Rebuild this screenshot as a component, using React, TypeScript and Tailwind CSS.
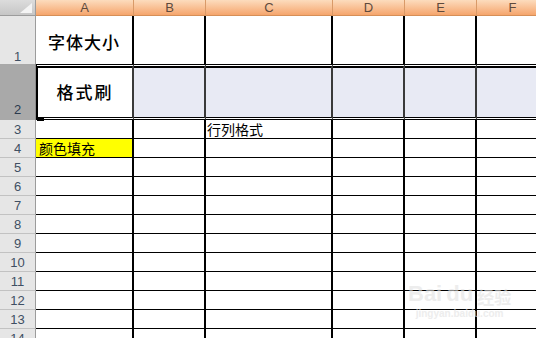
import React from 'react';

const colW = ['w-[98px]', 'w-[72px]', 'w-[127px]', 'w-[72px]', 'w-[72px]', 'w-[72px]'];
const letters = ['A', 'B', 'C', 'D', 'E', 'F'];
const cjk = "font-['Noto_Sans_CJK_SC',sans-serif]";

function RowHead({ n, dark, tall }: { n: number; dark?: boolean; tall?: boolean }) {
  return (
    <div
      className={`w-[36px] shrink-0 flex items-end justify-center border-r border-b border-r-[#9c9c9c] border-b-[#c2c2c2] font-['Liberation_Sans',sans-serif] text-[13px] ${
        tall ? 'leading-[14px] pb-px' : 'leading-[16px]'
      } ${dark ? 'bg-[#a9a9a9] text-[#2b3a4e]' : 'bg-[#e6e6e6] text-[#3f4f63]'}`}
    >
      {n}
    </div>
  );
}

function PlainRow({ n, a, c, yellow }: { n: number; a?: string; c?: string; yellow?: boolean }) {
  return (
    <div className="flex h-[19px] shrink-0">
      <RowHead n={n} />
      {colW.map((w, i) => (
        <div
          key={i}
          className={`${w} shrink-0 border-r-2 border-b border-black flex items-end overflow-hidden whitespace-nowrap ${cjk} text-[14px] leading-[17px] text-black ${
            i === 0 && yellow ? 'bg-[#ffff00] pl-[3px]' : 'bg-white pl-px'
          }`}
        >
          {i === 0 ? a : i === 2 ? c : null}
        </div>
      ))}
    </div>
  );
}

export default function App() {
  return (
    <div className="relative w-[536px] h-[338px] overflow-hidden bg-white flex flex-col">
      {/* column headers */}
      <div className="flex h-[16px] shrink-0">
        <div className="w-[36px] shrink-0 bg-gradient-to-b from-[#dcdcdc] to-[#c6c6c6] border-r border-b border-[#9c9c9c] flex justify-end items-end pr-[3px] pb-[2px]">
          <svg width="12" height="10" viewBox="0 0 12 10">
            <polygon points="12,0 12,10 0,10" fill="#f4f4f4" />
          </svg>
        </div>
        {colW.map((w, i) => (
          <div
            key={i}
            className={`${w} shrink-0 bg-gradient-to-b from-[#fcdcbd] to-[#f5a56c] border-r border-b border-r-[#d99a68] border-b-[#d68f57] flex items-center justify-center font-['Liberation_Sans',sans-serif] text-[13px] leading-none text-[#5e4a3c]`}
          >
            {letters[i]}
          </div>
        ))}
      </div>

      {/* row 1 */}
      <div className="flex h-[48px] shrink-0">
        <div className="w-[36px] shrink-0 flex items-end justify-center bg-[#e6e6e6] border-r border-[#9c9c9c] font-['Liberation_Sans',sans-serif] text-[13px] leading-[14px] text-[#3f4f63]">
          1
        </div>
        {colW.map((w, i) => (
          <div
            key={i}
            className={`${w} shrink-0 border-r-2 border-black bg-white flex items-center justify-center pt-[3px] ${cjk} text-[17px] font-medium tracking-[1px] text-black`}
          >
            {i === 0 ? '字体大小' : null}
          </div>
        ))}
      </div>

      {/* row 2 (selected) */}
      <div className="flex h-[56px] shrink-0">
        <div className="w-[36px] shrink-0 flex items-end justify-center bg-[#a9a9a9] border-r border-[#8c8c8c] font-['Liberation_Sans',sans-serif] text-[13px] leading-[14px] pb-[3px] text-[#2b3a4e]">
          2
        </div>
        {colW.map((w, i) => (
          <div
            key={i}
            className={`${w} shrink-0 border-y-[3px] border-double border-black border-r-2 border-r-[#3a3a3a] bg-clip-padding shadow-[inset_0_1px_0_#000] flex items-center justify-center ${cjk} text-[17px] font-medium tracking-[2px] text-black ${
              i === 0 ? 'bg-white border-l-2 border-l-black' : 'bg-[#e8eaf4]'
            }`}
          >
            {i === 0 ? '格式刷' : null}
          </div>
        ))}
      </div>

      <PlainRow n={3} c="行列格式" />
      <PlainRow n={4} a="颜色填充" yellow />
      {[5, 6, 7, 8, 9, 10, 11, 12, 13, 14].map((n) => (
        <PlainRow key={n} n={n} />
      ))}

      {/* fill handle */}
      <div className="absolute left-[37px] top-[117px] w-[7px] h-[4px] bg-black" />

      {/* watermark */}
      <div className="absolute left-[408px] top-[283px] flex flex-col items-center pointer-events-none select-none opacity-60">
        <div className="flex items-end gap-1 font-['Liberation_Sans',sans-serif] text-[22px] font-bold leading-none text-[#e2e2e2]">
          <span>Bai</span>
          <span>du</span>
          <span className={`${cjk} text-[17px]`}>经验</span>
        </div>
        <div className="font-['Liberation_Sans',sans-serif] text-[10px] font-bold leading-[12px] text-[#e2e2e2] mt-[3px]">
          jingyan.baidu.com
        </div>
      </div>
    </div>
  );
}
